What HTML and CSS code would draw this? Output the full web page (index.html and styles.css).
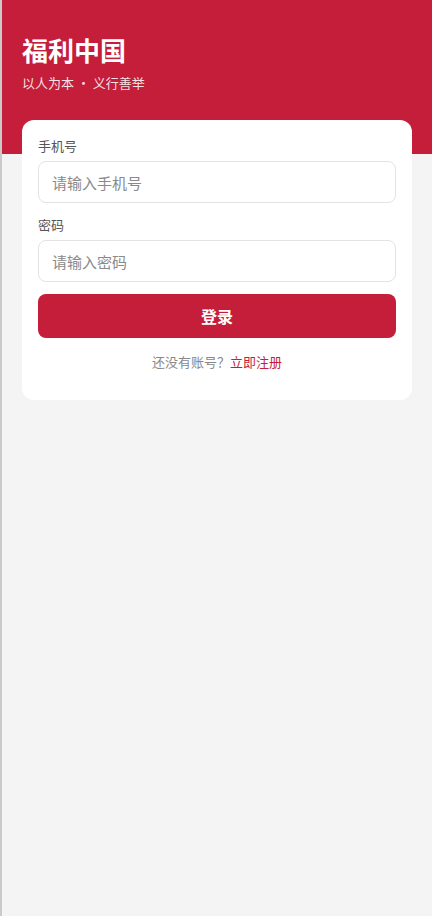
FILE: index.html
```html
<!DOCTYPE html>
<html lang="zh-CN">
<head>
  <meta charset="UTF-8">
  <title>福利中国 - 登录</title>
  <link rel="stylesheet" href="styles.css">
</head>
<body>

  <div class="page">
    <div class="header">
      <h1>福利中国</h1>
      <p class="slogan">以人为本 · 义行善举</p>
    </div>

    <div class="card">
      <div class="form-group">
        <label for="phone">手机号</label>
        <input type="text" id="phone" placeholder="请输入手机号">
      </div>

      <div class="form-group">
        <label for="password">密码</label>
        <input type="password" id="password" placeholder="请输入密码">
      </div>

      <button class="btn-login">登录</button>

      <p class="register">还没有账号？<a href="#">立即注册</a></p>
    </div>
  </div>

</body>
</html>
```

FILE: styles.css
```css
html, body {
  margin: 0;
  padding: 0;
  height: 100%;
}
body {
  font-family: "Noto Sans CJK SC", "Noto Sans", sans-serif;
  background-color: #f4f4f4;
}
.page {
  min-height: 100%;
  border-left: 2px solid #cacaca;
  box-sizing: border-box;
}
.header {
  background-color: #c41e3a;
  color: #fff;
  padding: 34px 20px 62px;
}
.header h1 {
  margin: 0;
  font-size: 26px;
  line-height: 32px;
  font-weight: bold;
}
.slogan {
  margin: 8px 0 0;
  font-size: 13px;
  line-height: 18px;
  color: rgba(255, 255, 255, 0.88);
}
.card {
  background-color: #fff;
  margin: -34px 20px 0;
  border-radius: 12px;
  padding: 17px 16px 29px;
}
.form-group {
  margin-bottom: 13px;
}
label {
  display: block;
  font-size: 13px;
  line-height: 18px;
  color: #555;
  margin-bottom: 6px;
}
input {
  display: block;
  width: 100%;
  height: 42px;
  box-sizing: border-box;
  padding: 0 13px;
  border: 1px solid #e3e3e3;
  border-radius: 8px;
  font-family: inherit;
  font-size: 15px;
  color: #333;
  outline: none;
}
input::placeholder {
  color: #8a8a8a;
}
.btn-login {
  display: block;
  width: 100%;
  height: 44px;
  margin-top: -1px;
  border: none;
  border-radius: 8px;
  background-color: #c41e3a;
  color: #fff;
  font-family: inherit;
  font-size: 16px;
  font-weight: bold;
  cursor: pointer;
}
.register {
  margin: 15px 0 0;
  text-align: center;
  font-size: 13px;
  line-height: 18px;
  color: #888;
}
.register a {
  color: #c41e3a;
  text-decoration: none;
}
```
